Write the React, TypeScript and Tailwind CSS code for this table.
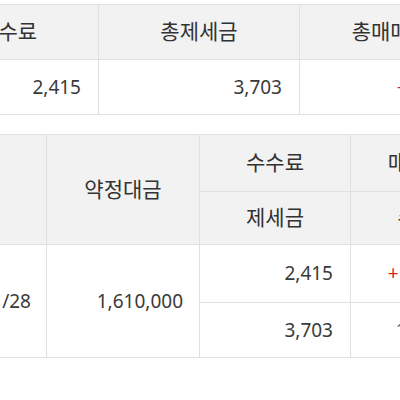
const font = "font-['Noto_Sans','Noto_Sans_CJK_KR',sans-serif]";
const th = "border border-[#e0e0e0] font-normal text-[21px] text-[#333]";
const td = "border border-[#e0e0e0] pr-[17px] text-right";

export default function App() {
  return (
    <div className={`w-[400px] h-[400px] overflow-hidden bg-white text-[19px] text-[#3a3a3a] ${font}`}>
      <table className="ml-[-102px] mt-[4px] w-[602px] table-fixed border-collapse">
        <colgroup>
          <col className="w-[200px]" />
          <col className="w-[201px]" />
          <col className="w-[201px]" />
        </colgroup>
        <thead>
          <tr className="h-[55px] bg-[#f2f2f2]">
            <th className={th}>총수수료</th>
            <th className={th}>총제세금</th>
            <th className={th}>총매매손익</th>
          </tr>
        </thead>
        <tbody>
          <tr className="h-[55px]">
            <td className={td}>2,415</td>
            <td className={td}>3,703</td>
            <td className="border border-[#e0e0e0] pr-[22px] text-right text-[#e02020]">+124,882</td>
          </tr>
        </tbody>
      </table>

      <table className="ml-[-106px] mt-[19px] w-[608px] table-fixed border-collapse">
        <colgroup>
          <col className="w-[152px]" />
          <col className="w-[153px]" />
          <col className="w-[151px]" />
          <col className="w-[152px]" />
        </colgroup>
        <thead>
          <tr className="h-[57px] bg-[#f2f2f2]">
            <th rowSpan={2} className={th}>일자</th>
            <th rowSpan={2} className={th}>약정대금</th>
            <th className={th}>수수료</th>
            <th className={th}>매매손익</th>
          </tr>
          <tr className="h-[53px] bg-[#f2f2f2]">
            <th className={th}>제세금</th>
            <th className={th}>수익률</th>
          </tr>
        </thead>
        <tbody>
          <tr className="h-[58px]">
            <td rowSpan={2} className="border border-[#e0e0e0] pr-[15px] text-right">2024/01/28</td>
            <td rowSpan={2} className="border border-[#e0e0e0] pr-[16px] text-right">1,610,000</td>
            <td className={td}>2,415</td>
            <td className={`${td} text-[#e02020]`}>+1,124,882</td>
          </tr>
          <tr className="h-[55px]">
            <td className={td}>3,703</td>
            <td className="border border-[#e0e0e0] pr-[15px] text-right text-[#666]">1,117.76%</td>
          </tr>
        </tbody>
      </table>
    </div>
  );
}
